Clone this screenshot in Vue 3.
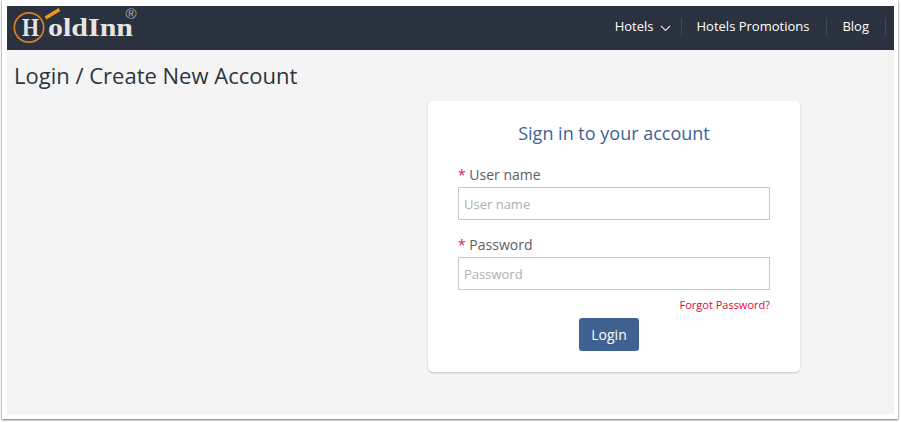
<script setup>
const navItems = [
  { label: 'Hotels', caret: true },
  { label: 'Hotels Promotions' },
  { label: 'Blog' }
]
const fields = [
  { label: 'User name', type: 'text' },
  { label: 'Password', type: 'password' }
]
</script>

<template>
  <div class="screen">
    <div class="window">
      <header class="topbar">
        <svg class="logo" width="134" height="44" viewBox="0 0 134 44" aria-label="HoldInn">
          <circle cx="22" cy="21.5" r="14.7" fill="none" stroke="#d9801f" stroke-width="1.7" />
          <line x1="38.5" y1="12" x2="52.5" y2="3.5" stroke="#f0951f" stroke-width="3.6" />
          <text x="15" y="30" class="logo-text" textLength="17" lengthAdjust="spacingAndGlyphs">H</text>
          <text x="41" y="30" class="logo-text" textLength="85" lengthAdjust="spacingAndGlyphs">oldInn</text>
          <text x="124" y="12.5" class="logo-r" text-anchor="middle">®</text>
        </svg>
        <nav class="nav">
          <a v-for="item in navItems" :key="item.label" class="nav-item">
            <span class="nav-label">{{ item.label }}</span>
            <svg v-if="item.caret" class="caret" width="11" height="7" viewBox="0 0 11 7">
              <path d="M1 1l4.5 4.5L10 1" fill="none" stroke="#d8dbe0" stroke-width="1.2" />
            </svg>
          </a>
        </nav>
      </header>
      <main class="content">
        <h1 class="page-title">Login / Create New Account</h1>
        <form class="card" @submit.prevent>
          <h2 class="card-title">Sign in to your account</h2>
          <div v-for="field in fields" :key="field.label" class="field">
            <label class="label"><span class="req">*</span> {{ field.label }}</label>
            <input class="input" :type="field.type" :placeholder="field.label" />
          </div>
          <a class="forgot">Forgot Password?</a>
          <button class="login" type="submit">Login</button>
        </form>
      </main>
    </div>
  </div>
</template>

<style>
html, body { margin: 0; background: #fff; }
</style>

<style scoped>
.screen {
  width: 901px;
  height: 422px;
  box-sizing: border-box;
  padding: 0 3px 3px 2px;
  overflow: hidden;
  background: #fff;
  font-family: "Open Sans", sans-serif;
}
.window {
  height: 100%;
  box-sizing: border-box;
  padding: 6px 4px 5px 5px;
  background: #fff;
  box-shadow: 0 1px 2px rgba(0, 0, 0, 0.55), 0 0 1px rgba(0, 0, 0, 0.4);
  display: flex;
  flex-direction: column;
}
.topbar {
  height: 44px;
  flex: none;
  background: #2a3240;
  display: flex;
  align-items: center;
  justify-content: space-between;
}
.logo { display: block; }
.logo-text {
  font-family: "Liberation Serif", serif;
  font-size: 25px;
  font-weight: 700;
  fill: #e6e5e1;
}
.logo-r {
  font-family: "Liberation Sans", sans-serif;
  font-size: 15px;
  fill: #a9adb3;
}
.nav {
  display: flex;
  align-items: center;
  margin-bottom: 2px;
}
.nav-item {
  height: 18px;
  display: flex;
  align-items: center;
  padding: 0 17px 0 15px;
  color: #fff;
  font-size: 13px;
  border-right: 1px solid #3f4856;
}
.nav-label { margin-bottom: 3px; }
.nav-item:first-child { padding-right: 10px; }
.nav-item:last-child { margin-right: 8px; padding-right: 16px; }
.caret { margin-left: 6px; margin-top: 2px; }
.content {
  flex: 1;
  background: #f4f4f4;
  padding: 9px 7px 0;
}
.page-title {
  margin: 0 0 10px;
  font-size: 22px;
  line-height: 32px;
  font-weight: 400;
  color: #2c3440;
}
.card {
  width: 372px;
  height: 271px;
  box-sizing: border-box;
  margin-left: 414px;
  padding: 20px 30px 0;
  background: #fff;
  border-radius: 5px;
  box-shadow: 0 1px 2px rgba(0, 0, 0, 0.2);
  display: flex;
  flex-direction: column;
}
.card-title {
  margin: 0 0 19px;
  text-align: center;
  font-size: 18px;
  line-height: 25px;
  font-weight: 400;
  color: #3f6293;
}
.field { margin-bottom: 15px; }
.field:nth-of-type(2) { margin-bottom: 7px; }
.label {
  display: block;
  font-size: 14px;
  line-height: 19px;
  margin-bottom: 3px;
  color: #5c6066;
}
.req { color: #e0224e; }
.input {
  display: block;
  width: 100%;
  height: 33px;
  box-sizing: border-box;
  padding: 0 5px;
  border: 1px solid #c8c8c8;
  background: #fff;
  font-family: inherit;
  font-size: 13px;
  outline: none;
}
.input::placeholder { color: #b0b0b0; opacity: 1; }
.forgot {
  align-self: flex-end;
  font-size: 11px;
  line-height: 16px;
  color: #e8003a;
}
.login {
  align-self: center;
  width: 60px;
  height: 33px;
  margin: 5px 10px 0 0;
  padding: 0;
  border: 0;
  border-radius: 3px;
  background: #3f6293;
  color: #fff;
  font-family: inherit;
  font-size: 14px;
}
</style>
